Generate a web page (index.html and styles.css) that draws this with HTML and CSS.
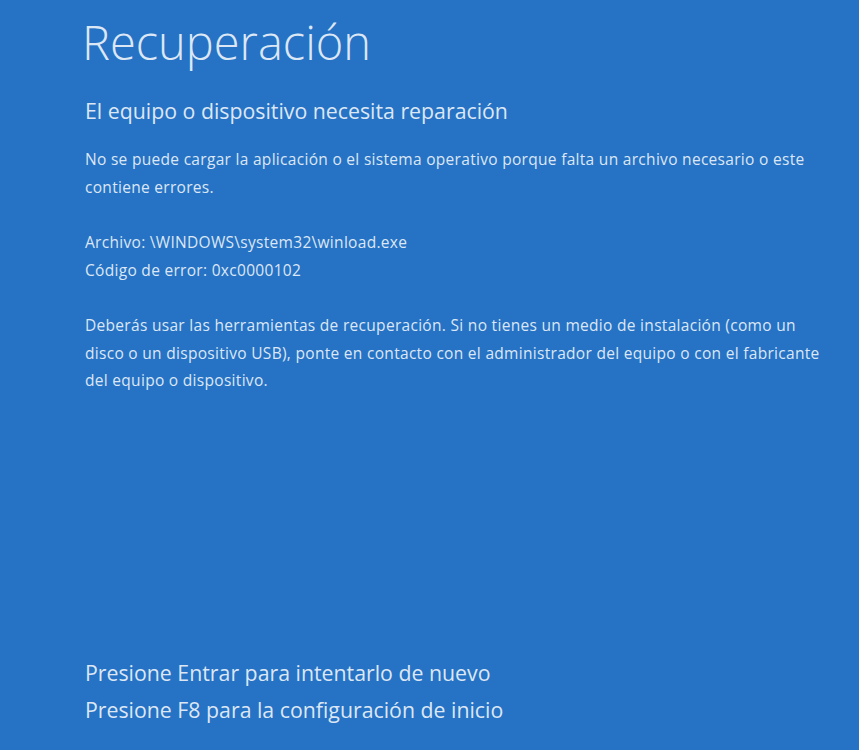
FILE: index.html
```html
<!DOCTYPE html>
<html lang="es">
<head>
  <meta charset="UTF-8">
  <title>Recuperación</title>
  <link rel="stylesheet" href="styles.css">
</head>
<body>
  <div class="pantalla">
    <div class="contenido">
      <h1 class="titulo">Recuperación</h1>
      <h2 class="subtitulo">El equipo o dispositivo necesita reparación</h2>
      <p class="texto">No se puede cargar la aplicación o el sistema operativo porque falta un archivo necesario o este contiene errores.</p>
      <p class="texto">Archivo: \WINDOWS\system32\winload.exe<br>Código de error: 0xc0000102</p>
      <p class="texto">Deberás usar las herramientas de recuperación. Si no tienes un medio de instalación (como un disco o un dispositivo USB), ponte en contacto con el administrador del equipo o con el fabricante del equipo o dispositivo.</p>
    </div>
    <div class="opciones">
      <p>Presione Entrar para intentarlo de nuevo</p>
      <p>Presione F8 para la configuración de inicio</p>
    </div>
  </div>
</body>
</html>
```

FILE: styles.css
```css
html, body {
  margin: 0;
  padding: 0;
  height: 100%;
}
body {
  background: #2672c4;
  color: #dce7f5;
  font-family: 'Open Sans', sans-serif;
}
.pantalla {
  box-sizing: border-box;
  height: 100vh;
  padding: 0 0 0 85px;
  display: flex;
  flex-direction: column;
  justify-content: space-between;
}
.contenido {
  width: 745px;
}
.titulo {
  margin: 10px 0 0 -3px;
  font-size: 47px;
  font-weight: 300;
  line-height: 64px;
}
.subtitulo {
  margin: 22px 0 20px;
  font-size: 21.3px;
  font-weight: 400;
  line-height: 30px;
}
.texto {
  margin: 0 0 28px;
  font-size: 15.5px;
  line-height: 27.5px;
  letter-spacing: 0.3px;
}
.opciones {
  padding-bottom: 22px;
}
.opciones p {
  margin: 0;
  font-size: 21.3px;
  line-height: 37px;
}
```
